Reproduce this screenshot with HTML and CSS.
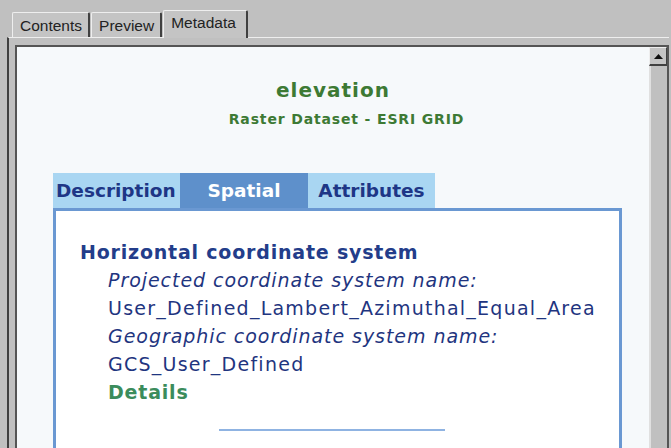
FILE: index.html
```html
<!DOCTYPE html>
<html>
<head>
<meta charset="utf-8">
<link rel="stylesheet" href="styles.css">
</head>
<body>
<div class="window">
  <div class="tabs">
    <div class="tab">Contents</div>
    <div class="tab">Preview</div>
    <div class="tab active">Metadata</div>
  </div>
  <div class="panel">
    <div class="frame">
      <div class="content">
        <div class="title">elevation</div>
        <div class="subtitle">Raster Dataset - ESRI GRID</div>
        <div class="mtabs">
          <div class="mtab">Description</div>
          <div class="mtab sel">Spatial</div>
          <div class="mtab">Attributes</div>
        </div>
        <div class="box">
          <div class="h">Horizontal coordinate system</div>
          <div class="ind lbl">Projected coordinate system name:</div>
          <div class="ind val">User_Defined_Lambert_Azimuthal_Equal_Area</div>
          <div class="ind lbl">Geographic coordinate system name:</div>
          <div class="ind val">GCS_User_Defined</div>
          <div class="ind det">Details</div>
          <div class="rule"></div>
        </div>
      </div>
      <div class="scrollbar">
        <div class="sbtn"><svg width="9" height="5" viewBox="0 0 9 5"><path d="M0 5 L4.5 0 L9 5 Z" fill="#111"/></svg></div>
        <div class="track"></div>
      </div>
    </div>
  </div>
</div>
</body>
</html>
```
FILE: styles.css
```css
html, body { margin: 0; padding: 0; }
body { background: #c0c0c0; width: 671px; height: 448px; overflow: hidden; }
.window { padding: 10px 2px 0 7px; height: 438px; display: flex; flex-direction: column; }
.tabs { display: flex; align-items: flex-end; height: 27px; padding-left: 5px; position: relative; z-index: 1; }
.tab {
  font-family: "Liberation Sans", Arial, sans-serif; font-size: 15.5px; color: #222;
  height: 25px; line-height: 25px; padding: 0 6px 0 7px; box-sizing: border-box;
  border-top: 1px solid #eeeeee; border-left: 1px solid #eeeeee; border-right: 2px solid #404040;
  border-radius: 2px 2px 0 0; background: #c4c4c4; margin-right: 1px;
}
.tab.active { height: 28px; line-height: 24px; margin-bottom: -1px; background: #c4c4c4; padding: 0 10px 0 7px; }
.panel { flex: 1; border-top: 1px solid #eeeeee; border-left: 2px solid #404040; padding: 7px 0 0 6px; display: flex; }
.frame { flex: 1; display: flex; border-top: 2px solid #555; border-left: 2px solid #555; border-right: 2px solid #555; }
.content { flex: 1; background: #f6f9fb; display: flex; flex-direction: column; align-items: stretch; font-family: "DejaVu Sans", Verdana, sans-serif; }
.title { text-align: center; color: #3d7a34; font-weight: bold; font-size: 20px; letter-spacing: 1px; margin-top: 31px; line-height: 24px; }
.subtitle { text-align: center; color: #3d7a34; font-weight: bold; font-size: 14px; letter-spacing: 0.85px; line-height: 18px; margin-top: 8px; padding-left: 27px; }
.mtabs { display: flex; margin: 45px 27px 0 36px; height: 35px; }
.mtab { width: 127px; background: #a9d6f2; color: #1e3686; font-weight: bold; font-size: 18.5px; line-height: 35px; text-align: center; }
.mtab:first-child { text-align: left; padding-left: 3px; width: 124px; }
.mtab.sel { background: #5e90cb; color: #fff; width: 128px; }
.box { margin: 0 27px 0 36px; flex: 1; background: #fff; border: 3px solid #6a98d2; border-bottom: none; padding: 27px 0 0 24px; color: #1f3580; }
.h { font-weight: bold; font-size: 19px; letter-spacing: 0.8px; line-height: 28px; color: #233d8a; }
.ind { margin-left: 28px; font-size: 19px; letter-spacing: 1.25px; line-height: 28px; }
.lbl { font-style: italic; letter-spacing: 0.95px; }
.det { font-weight: bold; color: #3b8c5c; letter-spacing: 0.8px; }
.rule { width: 226px; height: 2px; background: #8fb3e2; margin: 23px 0 0 139px; }
.scrollbar { width: 18px; display: flex; flex-direction: column; background: #c0c0c0; }
.sbtn { height: 19px; box-sizing: border-box; border: 1px solid #eee; border-right-color: #404040; border-bottom: 2px solid #404040; display: flex; align-items: center; justify-content: center; background: #c4c4c4; }
.track { flex: 1; border-left: 2px solid #e0e0e0; background: #c0c0c0; }
```
